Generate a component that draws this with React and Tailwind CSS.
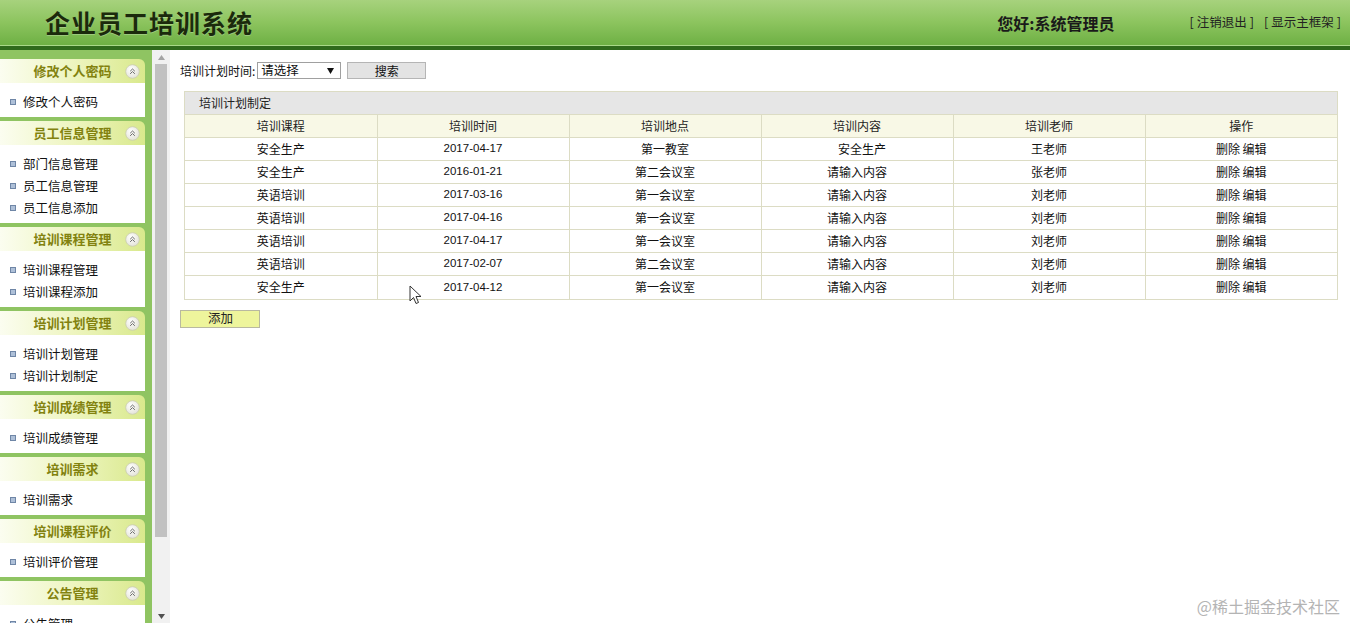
import React from "react";

const F = { fontFamily: '"Noto Sans CJK SC", "Liberation Sans", sans-serif' };

const menus = [
  { title: "修改个人密码", items: ["修改个人密码"] },
  { title: "员工信息管理", items: ["部门信息管理", "员工信息管理", "员工信息添加"] },
  { title: "培训课程管理", items: ["培训课程管理", "培训课程添加"] },
  { title: "培训计划管理", items: ["培训计划管理", "培训计划制定"] },
  { title: "培训成绩管理", items: ["培训成绩管理"] },
  { title: "培训需求", items: ["培训需求"] },
  { title: "培训课程评价", items: ["培训评价管理"] },
  { title: "公告管理", items: ["公告管理"] },
];

const rows = [
  ["安全生产", "2017-04-17", "第一教室", "安全生产", "王老师"],
  ["安全生产", "2016-01-21", "第二会议室", "请输入内容", "张老师"],
  ["英语培训", "2017-03-16", "第一会议室", "请输入内容", "刘老师"],
  ["英语培训", "2017-04-16", "第一会议室", "请输入内容", "刘老师"],
  ["英语培训", "2017-04-17", "第一会议室", "请输入内容", "刘老师"],
  ["英语培训", "2017-02-07", "第二会议室", "请输入内容", "刘老师"],
  ["安全生产", "2017-04-12", "第一会议室", "请输入内容", "刘老师"],
];

function CollapseIcon() {
  return (
    <svg width="15" height="15" viewBox="0 0 15 15">
      <defs>
        <radialGradient id="cg" cx="0.4" cy="0.35" r="0.7">
          <stop offset="0" stopColor="#ffffff" />
          <stop offset="1" stopColor="#e2e2d6" />
        </radialGradient>
      </defs>
      <circle cx="7.5" cy="7.5" r="6.8" fill="url(#cg)" stroke="#c9cbb0" strokeWidth="0.8" />
      <path d="M5.2 7.2 L7.5 5 L9.8 7.2 M5.2 9.8 L7.5 7.6 L9.8 9.8" fill="none" stroke="#666" strokeWidth="1" />
    </svg>
  );
}

function Section({ title, items }) {
  return (
    <div className="mb-[4px]">
      <div className="flex h-[24px] items-center rounded-tr-[6px] bg-gradient-to-r from-[#fbfdf0] via-[#eef5c0] to-[#d9e98c]">
        <div className="w-[26px]" />
        <div className="flex-1 text-center text-[13px] font-bold text-[#82820f]" style={F}>
          {title}
        </div>
        <div className="flex w-[26px] items-center justify-center">
          <CollapseIcon />
        </div>
      </div>
      <div className="bg-white pt-[8px] pb-[4px]">
        {items.map((it) => (
          <div key={it} className="flex h-[22px] items-center pl-[10px]">
            <span className="mr-[7px] inline-block h-[6px] w-[6px] border border-[#6f86a6] bg-[#aec0d8]" />
            <span className="text-[12.5px] text-[#111]" style={F}>
              {it}
            </span>
          </div>
        ))}
      </div>
    </div>
  );
}

export default function App() {
  return (
    <div className="relative flex h-[623px] w-[1350px] flex-col overflow-hidden bg-white" style={F}>
      {/* header */}
      <div className="flex h-[46px] items-center bg-gradient-to-b from-[#a7d27d] via-[#8cc45e] to-[#6eb044] border-b border-[#a8d888]">
        <div
          className="ml-[45px] text-[25px] font-bold tracking-[1px] text-[#1b2a0c]"
          style={{ ...F, textShadow: "0 1px 0 rgba(255,255,255,0.25)" }}
        >
          企业员工培训系统
        </div>
        <div className="flex-1" />
        <div className="mr-[75px] text-[16px] font-bold text-[#1a1a1a]">您好:系统管理员</div>
        <div className="mr-[9px] flex gap-[10px] text-[12.5px] text-[#222]">
          <span>
            [<span className="mx-[3px]">注销退出</span>]
          </span>
          <span>
            [<span className="mx-[3px]">显示主框架</span>]
          </span>
        </div>
      </div>
      <div className="h-[4px] bg-[#2f6a1c]" />

      <div className="flex flex-1 overflow-hidden">
        {/* sidebar */}
        <div className="flex w-[152px] flex-col bg-[#8fc462] pt-[9px] pr-[7px]">
          {menus.map((m) => (
            <Section key={m.title} {...m} />
          ))}
        </div>
        {/* fake scrollbar */}
        <div className="flex w-[18px] flex-col bg-[#f1f1f1] px-[3px]">
          <div className="flex h-[14px] items-center justify-center">
            <svg width="7" height="5" viewBox="0 0 7 5">
              <path d="M0 5 L3.5 0 L7 5Z" fill="#a3a3a3" />
            </svg>
          </div>
          <div className="h-[473px] bg-[#c1c1c1]" />
          <div className="flex-1" />
          <div className="flex h-[14px] items-center justify-center">
            <svg width="7" height="5" viewBox="0 0 7 5">
              <path d="M0 0 L7 0 L3.5 5Z" fill="#505050" />
            </svg>
          </div>
        </div>

        {/* main */}
        <div className="flex-1 pt-[12px] pl-[10px] pr-[12px]">
          <div className="flex h-[17px] items-center text-[12px] text-[#111]">
            <span>培训计划时间:</span>
            <div className="ml-[2px] flex h-[17px] w-[84px] items-center justify-between border border-[#a0a0a0] bg-white pl-[3px] pr-[6px] text-[12.5px]">
              <span>请选择</span>
              <svg width="7" height="6" viewBox="0 0 7 6">
                <path d="M0 0 L7 0 L3.5 6Z" fill="#111" />
              </svg>
            </div>
            <div className="ml-[6px] flex h-[17px] w-[79px] items-center justify-center border border-[#b5b5b5] bg-[#e3e3e3] text-[12px]">
              搜索
            </div>
          </div>

          <div className="mt-[12px] ml-[4px] w-[1154px] border border-[#dcdcc4]">
            <div className="flex h-[22px] items-center bg-[#e6e6e6] pl-[14px] text-[12px] text-[#222]">
              培训计划制定
            </div>
            <table className="w-full table-fixed border-collapse text-[12px] text-[#111]">
              <thead>
                <tr className="h-[23px] bg-[#f8f8e6]">
                  {["培训课程", "培训时间", "培训地点", "培训内容", "培训老师", "操作"].map((h, i) => (
                    <th
                      key={h}
                      className={`border-t border-[#dcdcc4] font-normal text-[#222] ${i > 0 ? "border-l" : ""}`}
                    >
                      {h}
                    </th>
                  ))}
                </tr>
              </thead>
              <tbody>
                {rows.map((r, ri) => (
                  <tr key={ri} className="h-[23px]">
                    {r.map((c, i) => (
                      <td
                        key={i}
                        className={`border-t border-[#dcdcc4] text-center ${i > 0 ? "border-l" : ""} ${
                          i === 1 ? "text-[11.5px]" : ""
                        } ${i === 3 && ri === 0 ? "pl-[10px]" : ""}`}
                        style={i === 1 ? { fontFamily: '"Liberation Sans", sans-serif' } : undefined}
                      >
                        {c}
                      </td>
                    ))}
                    <td className="border-t border-l border-[#dcdcc4] text-center">删除 编辑</td>
                  </tr>
                ))}
              </tbody>
            </table>
          </div>

          <div className="mt-[10px] flex h-[18px] w-[80px] items-center border border-[#b9b9a0] bg-[#eef59c] pl-[27px] text-[12.5px] text-[#222]">
            添加
          </div>
        </div>
      </div>

      {/* watermark */}
      <div className="absolute right-[10px] bottom-[5px] text-[16px] text-[#b4b4b4]">@稀土掘金技术社区</div>

      {/* mouse cursor */}
      <svg className="absolute left-[409px] top-[285px]" width="14" height="20" viewBox="0 0 14 20">
        <path d="M1 1 L1 16 L4.5 12.5 L7 18.5 L9.5 17.5 L7 11.5 L12 11.5 Z" fill="#fff" stroke="#333" strokeWidth="1" />
      </svg>
    </div>
  );
}
